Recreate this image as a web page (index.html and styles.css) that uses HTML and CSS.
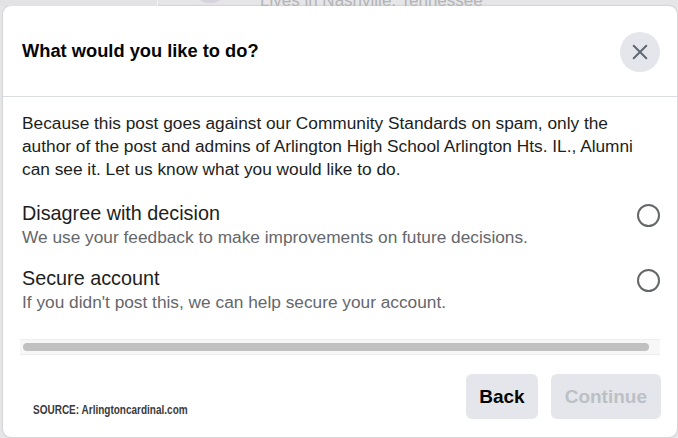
FILE: index.html
```html
<!DOCTYPE html>
<html lang="en">
<head>
  <meta charset="UTF-8" />
  <meta name="viewport" content="width=device-width, initial-scale=1.0"/>
  <title>What would you like to do?</title>
  <link rel="stylesheet" href="styles.css">
</head>
<body>
  <div class="backdrop">
    <div class="backdrop-side"></div>
    <div class="backdrop-avatar"></div>
    <div class="backdrop-text">Lives in Nashville, Tennessee</div>
  </div>

  <div class="dialog">
    <div class="dialog-header">
      <h2 class="dialog-title">What would you like to do?</h2>
      <button class="close-btn" aria-label="Close">
        <svg width="18" height="18" viewBox="0 0 20 20">
          <path d="M3 3 L17 17 M17 3 L3 17" stroke="#606770" stroke-width="2.2" stroke-linecap="round" fill="none"/>
        </svg>
      </button>
    </div>

    <div class="dialog-body">
      <p class="notice">Because this post goes against our Community Standards on spam, only the author of the post and admins of Arlington High School Arlington Hts. IL., Alumni can see it. Let us know what you would like to do.</p>

      <div class="options">
        <label class="option">
          <div class="option-text">
            <div class="option-title">Disagree with decision</div>
            <div class="option-desc">We use your feedback to make improvements on future decisions.</div>
          </div>
          <span class="radio"></span>
        </label>
        <label class="option">
          <div class="option-text">
            <div class="option-title">Secure account</div>
            <div class="option-desc">If you didn't post this, we can help secure your account.</div>
          </div>
          <span class="radio"></span>
        </label>
      </div>

      <div class="scroll-track"><div class="scroll-thumb"></div></div>
    </div>

    <div class="dialog-footer">
      <span class="source">SOURCE: Arlingtoncardinal.com</span>
      <div class="actions">
        <button class="btn">Back</button>
        <button class="btn btn-disabled">Continue</button>
      </div>
    </div>
  </div>
</body>
</html>
```

FILE: styles.css
```css
body {
  margin: 0;
  width: 678px;
  height: 438px;
  overflow: hidden;
  background: #e6e6e8;
  font-family: "Liberation Sans", Arial, sans-serif;
  color: #1c1e21;
}

/* page behind the dialog, only a sliver shows */
.backdrop {
  height: 6px;
  display: flex;
  align-items: flex-end;
  overflow: hidden;
}

.backdrop-side {
  flex: none;
  width: 157px;
  height: 6px;
  border-right: 1px solid #f0f0f2;
  background: #e3e3e5;
}

.backdrop-avatar {
  flex: none;
  width: 40px;
  height: 40px;
  margin: 0 0 3px 32px;
  border-radius: 50%;
  background: #d6d3de;
}

.backdrop-text {
  flex: none;
  margin: 0 0 -5px 30px;
  font-size: 17px;
  line-height: 20px;
  color: #b4b4b6;
}

.dialog {
  margin-left: 3px;
  width: 674px;
  height: 431px;
  background: #fff;
  border-radius: 8px;
  box-shadow: 0 0 2px rgba(0, 0, 0, 0.25);
  display: flex;
  flex-direction: column;
}

.dialog-header {
  height: 90px;
  padding: 0 17px 0 19px;
  display: flex;
  align-items: center;
  justify-content: space-between;
  border-bottom: 1px solid #dadde1;
}

.dialog-title {
  margin: 0;
  font-size: 18.3px;
  font-weight: bold;
  color: #050505;
}

.close-btn {
  width: 40px;
  height: 40px;
  margin-top: 2px;
  padding: 0;
  border: none;
  border-radius: 50%;
  background: #e4e6eb;
  display: flex;
  align-items: center;
  justify-content: center;
}

.dialog-body {
  flex: 1;
  padding: 0 17px 0 19px;
}

.notice {
  margin: 15px 10px 0 0;
  font-size: 17.3px;
  line-height: 22.8px;
}

.options {
  margin-top: 21px;
  display: flex;
  flex-direction: column;
  gap: 18px;
}

.option {
  display: flex;
  justify-content: space-between;
  align-items: flex-start;
}

.option-title {
  font-size: 19.8px;
  line-height: 24px;
}

.option-desc {
  margin-top: 1px;
  font-size: 17.3px;
  line-height: 22px;
  color: #65676b;
}

.radio {
  flex: none;
  width: 19px;
  height: 19px;
  margin-top: 3px;
  border: 2px solid #65676b;
  border-radius: 50%;
}

.scroll-track {
  margin: 26px 0 0 -2px;
  height: 14px;
  padding: 0 11px 0 3px;
  background: #f7f7f7;
  border-top: 1px solid #eeeeee;
  border-bottom: 1px solid #eeeeee;
  display: flex;
  align-items: center;
}

.scroll-thumb {
  flex: 1;
  height: 8px;
  border-radius: 4px;
  background: #c1c1c1;
}

.dialog-footer {
  padding: 0 16px 18px 30px;
  display: flex;
  align-items: flex-end;
  justify-content: space-between;
}

.source {
  display: inline-block;
  margin-bottom: 2px;
  font-size: 12.5px;
  font-weight: bold;
  color: #3a3a3a;
  transform: scaleX(0.8);
  transform-origin: left bottom;
}

.actions {
  display: flex;
  gap: 13px;
}

.btn {
  height: 45px;
  padding: 0 13px;
  border: none;
  border-radius: 6px;
  background: #e4e6eb;
  font-family: inherit;
  font-size: 19px;
  font-weight: bold;
  color: #050505;
}

.btn-disabled {
  padding: 0 14px;
  color: #bcc0c4;
}
```
